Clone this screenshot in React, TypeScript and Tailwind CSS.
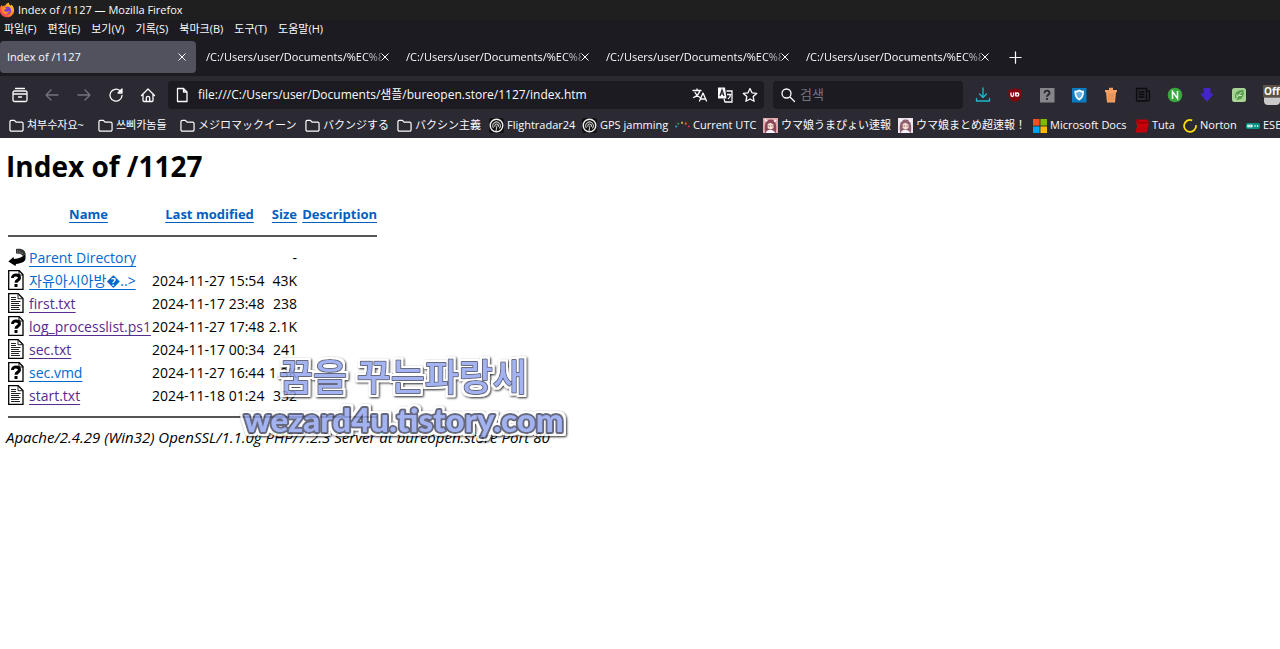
import { ReactNode } from "react";

const FOLDER = "M1 4a1.500 1.500 0 0 1 1.500-1.500h3.300l1.700 2h6A1.500 1.500 0 0 1 15 6v6.500a1.500 1.500 0 0 1-1.500 1.500h-11A1.500 1.500 0 0 1 1 12.500z";

function Line({ d, size = 16, className = "" }: { d: string; size?: number; className?: string }) {
  return (
    <svg width={size} height={size} viewBox="0 0 16 16" fill="none" stroke="currentColor" strokeWidth="1.3" strokeLinecap="round" strokeLinejoin="round" className={"shrink-0 " + className}>
      <path d={d} />
    </svg>
  );
}

function Pic({ children, size = 16 }: { children: ReactNode; size?: number }) {
  return (
    <svg width={size} height={size} viewBox="0 0 16 16" className="shrink-0">
      {children}
    </svg>
  );
}

function Fox() {
  return (
    <Pic>
      <defs>
        <linearGradient id="fox" x1="1" y1="0" x2="0" y2="1">
          <stop offset="0" stopColor="#ffe040" />
          <stop offset="0.45" stopColor="#ff8a20" />
          <stop offset="1" stopColor="#f4206a" />
        </linearGradient>
      </defs>
      <path d="M1 6c.3-1.500 1-2.500 2-3l.3 1.400C4.500 3.700 5.500 3.800 6 3.800 7 1.800 8.500 1 10 .8c-.3 1.500.8 2.200 2 3l.3-1.200C14.500 4.500 15.400 7 15 9.500 14.400 13 11.500 15.300 8 15.300S.8 12.500.7 8.500z" fill="url(#fox)" />
      <circle cx="8.200" cy="8.600" r="3.800" fill="#7a3bd8" />
      <path d="M2.500 5.500c2-1 4-.5 5.500 1-2 0-2 1.200-3 1.700 1 2 4 2.200 5.500.4C10 12.500 5 13.500 3.500 10z" fill="#ff8f1f" />
    </Pic>
  );
}

function Radar() {
  return (
    <Pic size={15}>
      <rect width="16" height="16" rx="3" fill="#111" />
      <circle cx="8" cy="8" r="6.700" fill="none" stroke="#eee" strokeWidth="1.500" />
      <path d="M7.500 14l1-6M4.700 10.500a4 4 0 1 1 6.300.5M6.500 9.500a2 2 0 1 1 3.500-.2" fill="none" stroke="#ccc" strokeWidth="1.100" />
    </Pic>
  );
}

function Girl({ hair, back }: { hair: string; back: string }) {
  return (
    <Pic size={15}>
      <rect width="16" height="16" fill={back} />
      <path d="M2.500 16C1 9 2 1.500 8 1.500S15 9 13.500 16z" fill={hair} />
      <path d="M5 6.500L8 5l3.200 1.800v3c-.7 3-5.500 3-6.200 0z" fill="#f8ddd0" />
      <path d="M6 8.500h1.200M9 8.500h1.200" stroke="#5b3448" />
      <path d="M3 16c1-4.500 8-4.500 10 0z" fill="#f5f0fa" />
      <path d="M2 1.500l2.500 2M14 2l-2 2" stroke="#fff" strokeWidth="1.500" />
    </Pic>
  );
}

const folder = <Line d={FOLDER} size={15} />;

const bookmarks = [
  { label: "쳐부수자요~", icon: folder, width: "w-[89px]" },
  { label: "쓰삐카놈들", icon: folder, width: "w-[82px]" },
  { label: "メジロマックイーン", icon: folder, width: "w-[125px]" },
  { label: "バクンジする", icon: folder, width: "w-[92px]" },
  { label: "バクシン主義", icon: folder, width: "w-[92px]" },
  { label: "Flightradar24", icon: <Radar />, width: "w-[93px]" },
  { label: "GPS jamming", icon: <Radar />, width: "w-[93px]" },
  {
    label: "Current UTC",
    width: "w-[88px]",
    icon: (
      <Pic size={15}>
        <path d="M.5 8.500l1.500 1" stroke="#2aa7d8" strokeWidth="2" />
        <path d="M3 5.500l1 1.500" stroke="#2fae5a" strokeWidth="1.800" />
        <path d="M7.500 4v2.200" stroke="#e8c22c" strokeWidth="1.800" />
        <path d="M12 5l-1 2" stroke="#e8682c" strokeWidth="1.800" />
        <path d="M15.500 8.500l-1.500 1" stroke="#d83a3a" strokeWidth="1.800" />
      </Pic>
    ),
  },
  { label: "ウマ娘うまぴょい速報", icon: <Girl hair="#8a4658" back="#e3a8ae" />, width: "w-[135px]" },
  { label: "ウマ娘まとめ超速報！", icon: <Girl hair="#8f6070" back="#efe3ee" />, width: "w-[135px]" },
  {
    label: "Microsoft Docs",
    width: "w-[102px]",
    icon: (
      <Pic size={14}>
        <path d="M0 0h7.500v7.500H0z" fill="#f25022" />
        <path d="M8.500 0H16v7.500H8.500z" fill="#7fba00" />
        <path d="M0 8.500h7.500V16H0z" fill="#00a4ef" />
        <path d="M8.500 8.500H16V16H8.500z" fill="#ffb900" />
      </Pic>
    ),
  },
  {
    label: "Tuta",
    width: "w-[48px]",
    icon: (
      <Pic size={14}>
        <path d="M1 .5h12.500L16 3.500 13.500 15.500H.5l1.800-7z" fill="#c4000b" />
        <path d="M1 .5l3.500 3.800H16" fill="none" stroke="#6d0008" />
      </Pic>
    ),
  },
  {
    label: "Norton",
    width: "w-[63px]",
    icon: (
      <Pic size={14}>
        <path d="M10.500 1.500A6.800 6.800 0 1 0 14.800 7" fill="none" stroke="#fde000" strokeWidth="2" />
      </Pic>
    ),
  },
  {
    label: "ESET",
    width: "w-[60px]",
    icon: (
      <Pic size={14}>
        <rect y="4.500" width="16" height="7" rx="2" fill="#0a8f83" />
        <path d="M1.500 6.500h6v3h-6z" fill="#fff" />
        <path d="M3 8h1M5 8h1" stroke="#0a8f83" />
        <path d="M9.500 8H11M12.500 8H14" stroke="#fff" strokeWidth="1.500" />
      </Pic>
    ),
  },
];

const extensions: { name: string; icon: ReactNode }[] = [
  { name: "Downloads", icon: <Line d="M8 1v9M4.500 7L8 10.500 11.500 7M1.500 11.500V14h13v-2.500" className="text-[#22b8d0]" /> },
  {
    name: "uBlock Origin",
    icon: (
      <Pic>
        <path d="M8 .7c2 1.500 4.200 2 6.500 2v5c0 3.300-2.200 6-6.500 7.600-4.300-1.600-6.500-4.300-6.500-7.600v-5c2.300 0 4.500-.5 6.500-2z" fill="#800610" />
        <path d="M4 5.500v2.600a1.300 1.300 0 0 0 2.600 0V5.500" fill="none" stroke="#fff" strokeWidth="1.300" />
        <circle cx="10.200" cy="7.600" r="1.600" fill="none" stroke="#fff" strokeWidth="1.300" />
        <path d="M8.600 5.200v4" stroke="#fff" strokeWidth="1.200" />
      </Pic>
    ),
  },
  {
    name: "Unknown",
    icon: (
      <Pic>
        <rect x="1" y="1" width="14.500" height="14.500" fill="#85858b" />
        <path d="M5.500 6.200c0-3.600 5-3.400 5 0 0 1.700-2.500 1.600-2.500 3.600M8 11v2" fill="none" stroke="#26262c" strokeWidth="1.800" />
      </Pic>
    ),
  },
  {
    name: "Shield",
    icon: (
      <Pic>
        <rect x="1" y="1" width="14.500" height="14.500" fill="#0d7ac0" />
        <path d="M8.200 2.500c1.500 1 3 1.300 4.800 1.300 0 5.200-1.200 7.700-4.800 9.700-3.600-2-4.800-4.500-4.800-9.700 1.800 0 3.300-.3 4.800-1.300z" fill="#fff" />
        <path d="M8.200 4.500c1 .6 2 .9 3 .9 0 3-.8 4.700-3 6-2.200-1.300-3-3-3-6 1 0 2-.3 3-.9z" fill="#6bb0e0" />
      </Pic>
    ),
  },
  {
    name: "Trash",
    icon: (
      <Pic>
        <path d="M2 3h4V.8h4V3h4v2.200H2zM3 5.200h10L12 15.500H4z" fill="#f5a062" />
        <path d="M6 6.500v7M8 6.500v7M10 6.500v7" stroke="#dd8140" strokeWidth=".8" />
      </Pic>
    ),
  },
  { name: "Reader", icon: <Line d="M1.500 1.500h10V14h-9a1 1 0 0 1-1-1zM11.500 4H14.500v8.500a1.500 1.500 0 0 1-3 0M4 5h5M4 7.500h5M4 10h5" className="text-[#0b0b0e]" /> },
  {
    name: "N",
    icon: (
      <Pic>
        <circle cx="8" cy="8" r="7.300" fill="#37a93c" />
        <path d="M5.500 12V4.500l5 7V4" fill="none" stroke="#fff" strokeWidth="1.500" />
      </Pic>
    ),
  },
  {
    name: "Save",
    icon: (
      <Pic>
        <path d="M4.500 1h7v5.500H15L8 15 1 6.500h3.500z" fill="#4325c8" />
      </Pic>
    ),
  },
  {
    name: "Leaf",
    icon: (
      <Pic>
        <rect x="1" y="1" width="14" height="14" rx="2.500" fill="#a8d396" />
        <path d="M4.500 12.500C2.500 6 6 2.500 12.500 3c1 6.500-1.500 10.500-8 9.500z" fill="#59a04c" />
        <path d="M3.500 13.500L10.500 5M6 10V7M8 8.500h3" stroke="#d3ecc8" fill="none" strokeWidth=".9" />
      </Pic>
    ),
  },
];

const unknownIcon = (
  <svg width="16" height="20" viewBox="0 0 16 20" className="block">
    <path d="M.7.7h10.500L15 4.500v14.800H.7z" fill="#fff" stroke="#000" strokeWidth="1.300" />
    <path d="M11 .7V5h4" fill="none" stroke="#000" />
    <path d="M4.500 8c0-4.200 7-4 7 0 0 2.300-3.500 2-3.500 4.800M8 14v3" fill="none" stroke="#000" strokeWidth="3" />
  </svg>
);

const textIcon = (
  <svg width="16" height="20" viewBox="0 0 16 20" className="block">
    <path d="M.7.7h9.500L15 5.500v13.800H.7z" fill="#fff" stroke="#000" strokeWidth="1.300" />
    <path d="M10 .7v5h5M3 4.500h5M3 6.500h5M3 8.500h9.500M3 10.500h8M3 12.500h9.500M3 14.500h8M3 16.500h9" fill="none" stroke="#222" />
  </svg>
);

const backIcon = (
  <svg width="18" height="20" viewBox="0 0 18 20" className="block">
    <path d="M17.500 6.500v5c0 3-4 5-9.500 5.500l-.5 2L.3 14.500 5.500 10l.5 2c5-.5 9.500-2 11.500-5.500z" fill="#000" />
    <path d="M8 2c6-1 9.500 1.500 9.500 5L15 9.500C14.500 7.500 11.500 6.500 8 6.500z" fill="#333" />
    <path d="M9 3l6 3.500M9 5l5 2.500" stroke="#aaa" strokeWidth=".8" strokeDasharray="1 1" />
  </svg>
);

const files = [
  { icon: unknownIcon, name: "자유아시아방�..>", date: "2024-11-27 15:54", size: "43K", visited: false },
  { icon: textIcon, name: "first.txt", date: "2024-11-17 23:48", size: "238", visited: true },
  { icon: unknownIcon, name: "log_processlist.ps1", date: "2024-11-27 17:48", size: "2.1K", visited: true },
  { icon: textIcon, name: "sec.txt", date: "2024-11-17 00:34", size: "241", visited: true },
  { icon: unknownIcon, name: "sec.vmd", date: "2024-11-27 16:44", size: "1.3K", visited: false },
  { icon: textIcon, name: "start.txt", date: "2024-11-18 01:24", size: "332", visited: true },
];

const menus = ["파일(F)", "편집(E)", "보기(V)", "기록(S)", "북마크(B)", "도구(T)", "도움말(H)"];

const link = "underline underline-offset-3 decoration-1 ";

function Close() {
  return (
    <button aria-label="Close tab" className="shrink-0">
      <svg width="8" height="8" viewBox="0 0 8 8" stroke="currentColor">
        <path d="M.5.5l7 7M7.500.5l-7 7" />
      </svg>
    </button>
  );
}

function Chrome() {
  return (
    <header className="bg-[#1c1b22] text-[11px] text-[#fbfbfe]">
      <div className="flex h-5 items-center gap-[3px] bg-[#1f1f1f]">
        <div className="-ml-px">
          <Fox />
        </div>
        <span>Index of /1127 — Mozilla Firefox</span>
      </div>
      <nav className="flex h-[18px] items-center gap-[11px] px-1">
        {menus.map((m) => (
          <button key={m}>{m}</button>
        ))}
      </nav>
      <div className="flex h-[38px] items-center">
        <div className="mr-[4px] flex h-8 w-[196px] items-center justify-between rounded bg-[#52525e] pr-[10px] pl-[7px]">
          <span>Index of /1127</span>
          <Close />
        </div>
        {[1, 2, 3, 4].map((n) => (
          <div key={n} className="flex h-8 w-[200px] items-center pl-[6px]">
            <span className="w-[175px] overflow-hidden whitespace-nowrap [mask-image:linear-gradient(to_right,#000_90%,#0006)]">
              /C:/Users/user/Documents/%EC%8
            </span>
            <Close />
          </div>
        ))}
        <button aria-label="New tab" className="ml-2">
          <Line d="M8 2v12M2 8h12" size={15} />
        </button>
      </div>
      <div className="bg-[#2b2a33]">
        <div className="flex h-[37px] items-center overflow-hidden pl-3">
          <div className="flex w-[156px] shrink-0 gap-4">
            <button aria-label="Container">
              <Line d="M3.500 1.500h9M1 5.500a1.500 1.500 0 0 1 1.500-1.500h11A1.500 1.500 0 0 1 15 5.500V13a1.500 1.500 0 0 1-1.500 1.500h-11A1.500 1.500 0 0 1 1 13zM1 7h14M6.500 10h3" />
            </button>
            <button aria-label="Back" className="text-[#75747d]">
              <Line d="M14 8H2M7 3L2 8l5 5" />
            </button>
            <button aria-label="Forward" className="text-[#75747d]">
              <Line d="M2 8h12M9 3l5 5-5 5" />
            </button>
            <button aria-label="Reload">
              <Line d="M14 8.500A6 6 0 1 1 12 3.700L14 5.500M14 2v4h-4z" />
            </button>
            <button aria-label="Home">
              <Line d="M1.500 8.500L8 2l6.500 6.500M3 7.500v6A1 1 0 0 0 4 14.500h8a1 1 0 0 0 1-1v-6M6.300 14.500V11a1.700 1.700 0 0 1 3.400 0v3.500" />
            </button>
          </div>
          <div className="flex h-[28px] w-[596px] shrink-0 items-center rounded bg-[#1c1b22] px-[6px]">
            <Line d="M3.500 1.500h6l3.500 3.500v9.500h-9.500zM9.500 1.500v3.500H13" />
            <input aria-label="Address" className="ml-2 min-w-0 grow bg-transparent text-[12px] outline-none" defaultValue="file:///C:/Users/user/Documents/샘플/bureopen.store/1127/index.htm" />
            <div className="flex gap-[9px]">
              <button aria-label="Translate">
                <Line d="M1 3.500h8M5 2v1.500M8 3.500C7 7 4 9.500 1.500 10.500M3 5.500c1 2 3 4 5 5M7.500 14L11 6l3.500 8M8.500 12h5" />
              </button>
              <button aria-label="Translate page">
                <Pic>
                  <path d="M1 .5h7l1.500 11H1z" fill="#fbfbfe" />
                  <path d="M3 9l2-6 2 6M3.500 7h3" fill="none" stroke="#1c1b22" strokeWidth="1.200" />
                  <path d="M9.500 4H15v11H8l-1-3M10 7.500h3.500c0 2-1 3.500-2.500 4.500" fill="none" stroke="#fbfbfe" strokeWidth="1.300" />
                </Pic>
              </button>
              <button aria-label="Bookmark">
                <Line d="M8 1.500l2 4.300 4.700.6-3.500 3.200.9 4.700L8 12l-4.100 2.300.9-4.700L1.300 6.400 6 5.800z" />
              </button>
            </div>
          </div>
          <div className="ml-[9px] flex h-[28px] w-[190px] shrink-0 items-center gap-1 rounded bg-[#1c1b22] pl-[7px]">
            <Line d="M11 6.500a4.500 4.500 0 1 1-9 0 4.500 4.500 0 0 1 9 0zM10 10l4.500 4.500" />
            <input aria-label="Search" placeholder="검색" className="min-w-0 grow bg-transparent text-[13px] outline-none placeholder:text-[#75747d]" />
          </div>
          <div className="ml-3 flex shrink-0 items-center gap-4">
            {extensions.map((e) => (
              <button key={e.name} aria-label={e.name}>
                {e.icon}
              </button>
            ))}
            <button aria-label="Script switch" className="flex flex-col items-center">
              <span className="bg-[#5f5244] px-px text-[10px] leading-3 font-bold">Off</span>
              <span className="h-2 w-4 rounded-b border-t border-[#777] bg-[#c9c9c9]"></span>
            </button>
          </div>
        </div>
        <div className="flex h-[25px] items-center overflow-hidden pl-[9px] whitespace-nowrap">
          {bookmarks.map((b) => (
            <a key={b.label} href="#" className={"flex shrink-0 items-center gap-[3px] " + b.width}>
              {b.icon}
              {b.label}
            </a>
          ))}
        </div>
      </div>
    </header>
  );
}

function Watermark() {
  return (
    <svg width="340" height="100" viewBox="0 0 340 100" className="pointer-events-none absolute top-[212px] left-[236px] opacity-85">
      <defs>
        <filter id="halo" x="-5%" y="-10%" width="110%" height="125%">
          <feMorphology in="SourceAlpha" operator="dilate" radius="2" result="fat" />
          <feFlood floodColor="#fff" />
          <feComposite in2="fat" operator="in" result="white" />
          <feGaussianBlur in="fat" stdDeviation="1" />
          <feOffset dx="1" dy="1" result="shade" />
          <feMerge>
            <feMergeNode in="shade" />
            <feMergeNode in="white" />
            <feMergeNode in="SourceGraphic" />
          </feMerge>
        </filter>
      </defs>
      <g filter="url(#halo)" fill="#93a5ee" stroke="#4d5068" strokeLinejoin="round" className="[paint-order:stroke]">
        <text x="43" y="41" strokeWidth="2" className="text-[37px] font-medium">꿈을 꾸는파랑새</text>
        <text x="8" y="82" strokeWidth="4" className="font-['Lato'] text-[33px] font-black">wezard4u.tistory.com</text>
      </g>
    </svg>
  );
}

export default function App() {
  return (
    <div className="min-h-screen bg-white font-['Open_Sans','Noto_Sans_CJK_KR',sans-serif]">
      <Chrome />
      <main className="relative px-[6px] text-[14px] leading-[23px] text-black">
        <h1 className="pt-2 text-[28px] leading-10 font-bold">Index of /1127</h1>
        <table className="mt-[17px] ml-[2px] w-[369px] table-fixed border-collapse text-left whitespace-nowrap">
          <colgroup>
            <col className="w-[21px]" />
            <col className="w-[123px]" />
            <col className="w-[115px]" />
            <col className="w-[30px]" />
            <col className="w-[80px]" />
          </colgroup>
          <thead>
            <tr className="text-center text-[13px] text-[#0060c0]">
              <th></th>
              <th className="pr-1">
                <a href="#" className={link}>Name</a>
              </th>
              <th>
                <a href="#" className={link}>Last modified</a>
              </th>
              <th className="text-right">
                <a href="#" className={link}>Size</a>
              </th>
              <th className="text-right">
                <a href="#" className={link}>Description</a>
              </th>
            </tr>
            <tr>
              <th colSpan={5} className="h-5">
                <hr className="border-t-2 border-[#555]" />
              </th>
            </tr>
          </thead>
          <tbody>
            <tr>
              <td className="pt-px align-top">{backIcon}</td>
              <td>
                <a href="#" className={link + "text-[#0069cf]"}>Parent Directory</a>
              </td>
              <td></td>
              <td className="text-right">-</td>
              <td></td>
            </tr>
            {files.map((f) => (
              <tr key={f.name}>
                <td className="pt-px align-top">{f.icon}</td>
                <td>
                  <a href="#" className={link + (f.visited ? "text-[#592a91]" : "text-[#0069cf]")}>{f.name}</a>
                </td>
                <td>{f.date}</td>
                <td className="text-right">{f.size}</td>
                <td></td>
              </tr>
            ))}
          </tbody>
        </table>
        <hr className="mt-[9px] ml-[2px] w-[369px] border-t-2 border-[#555]" />
        <address className="mt-2 text-[15px]">Apache/2.4.29 (Win32) OpenSSL/1.1.0g PHP/7.2.3 Server at bureopen.store Port 80</address>
        <Watermark />
      </main>
    </div>
  );
}
